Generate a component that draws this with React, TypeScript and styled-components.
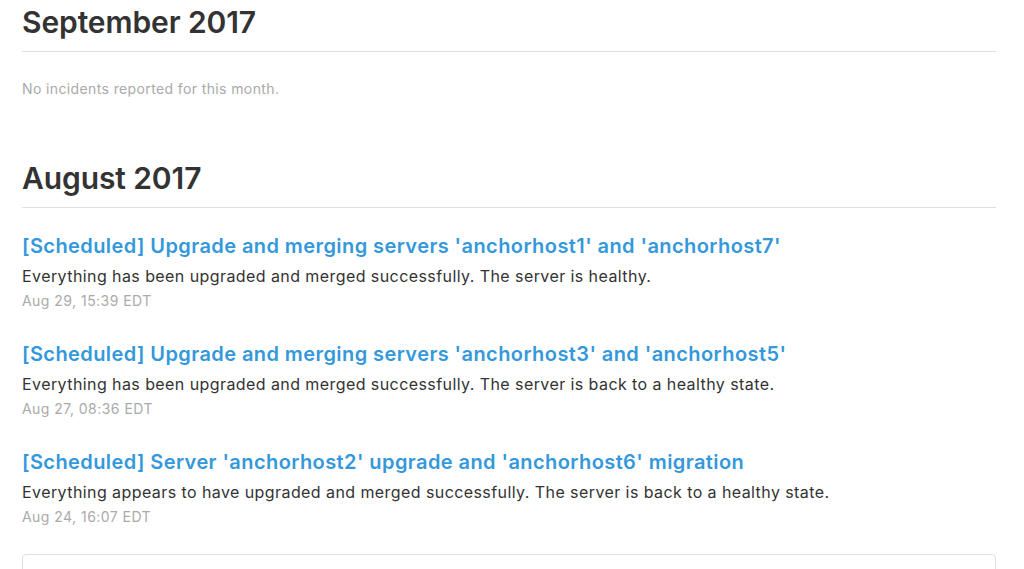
import styled, { createGlobalStyle } from 'styled-components';

const GlobalStyle = createGlobalStyle`
  html, body {
    margin: 0;
    padding: 0;
    background: #fff;
  }
  body {
    font-family: Inter, "Open Sans", "Liberation Sans", sans-serif;
    color: #333;
    -webkit-font-smoothing: antialiased;
  }
`;

type Incident = {
  title: string;
  message: string;
  date: string;
};

type Month = {
  name: string;
  incidents: Incident[];
};

const months: Month[] = [
  { name: 'September 2017', incidents: [] },
  {
    name: 'August 2017',
    incidents: [
      {
        title: "[Scheduled] Upgrade and merging servers 'anchorhost1' and 'anchorhost7'",
        message: 'Everything has been upgraded and merged successfully. The server is healthy.',
        date: 'Aug 29, 15:39 EDT',
      },
      {
        title: "[Scheduled] Upgrade and merging servers 'anchorhost3' and 'anchorhost5'",
        message:
          'Everything has been upgraded and merged successfully. The server is back to a healthy state.',
        date: 'Aug 27, 08:36 EDT',
      },
      {
        title: "[Scheduled] Server 'anchorhost2' upgrade and 'anchorhost6' migration",
        message:
          'Everything appears to have upgraded and merged successfully. The server is back to a healthy state.',
        date: 'Aug 24, 16:07 EDT',
      },
    ],
  },
];

const App = () => {
  return (
    <>
      <GlobalStyle />
      <Page>
        {months.map(({ name, incidents }) => (
          <MonthSection key={name}>
            <MonthHeading>{name}</MonthHeading>
            {incidents.length === 0 ? (
              <EmptyNote>No incidents reported for this month.</EmptyNote>
            ) : (
              <IncidentList>
                {incidents.map((incident) => (
                  <IncidentItem key={incident.date}>
                    <IncidentTitle href="#">{incident.title}</IncidentTitle>
                    <IncidentMessage>{incident.message}</IncidentMessage>
                    <IncidentDate>{incident.date}</IncidentDate>
                  </IncidentItem>
                ))}
              </IncidentList>
            )}
          </MonthSection>
        ))}
        <ShowAllButton type="button">Show All Scheduled</ShowAllButton>
      </Page>
    </>
  );
};

const Page = styled.div`
  padding: 0 28px 0 22px;
  display: flex;
  flex-direction: column;
`;

const MonthSection = styled.section`
  display: flex;
  flex-direction: column;
  & + & {
    margin-top: 57px;
  }
`;

const MonthHeading = styled.h2`
  margin: 0;
  font-size: 30px;
  line-height: 44px;
  font-weight: 600;
  letter-spacing: -0.1px;
  color: #333;
  padding-bottom: 7px;
  border-bottom: 1px solid #e0e0e0;
`;

const EmptyNote = styled.p`
  margin: 27px 0 0;
  font-size: 14px;
  line-height: 20px;
  letter-spacing: 0.38px;
  color: #aaa;
`;

const IncidentList = styled.ul`
  list-style: none;
  margin: 23px 0 0;
  padding: 0;
  display: flex;
  flex-direction: column;
  gap: 26px;
`;

const IncidentItem = styled.li`
  display: flex;
  flex-direction: column;
`;

const IncidentTitle = styled.a`
  font-size: 20px;
  line-height: 30px;
  font-weight: 600;
  letter-spacing: 0.42px;
  color: #3498db;
  text-decoration: none;
`;

const IncidentMessage = styled.p`
  margin: 2px 0 0;
  font-size: 16px;
  line-height: 26px;
  letter-spacing: 0.42px;
  color: #333;
`;

const IncidentDate = styled.small`
  font-size: 14px;
  line-height: 24px;
  letter-spacing: 0.46px;
  color: #aaa;
`;

const ShowAllButton = styled.button`
  margin-top: 25px;
  height: 44px;
  border: 1px solid #e0e0e0;
  border-radius: 4px;
  background: #fff;
  font-family: inherit;
  font-size: 13px;
  letter-spacing: 0.3px;
  color: #999;
  cursor: pointer;
`;

export default App;
